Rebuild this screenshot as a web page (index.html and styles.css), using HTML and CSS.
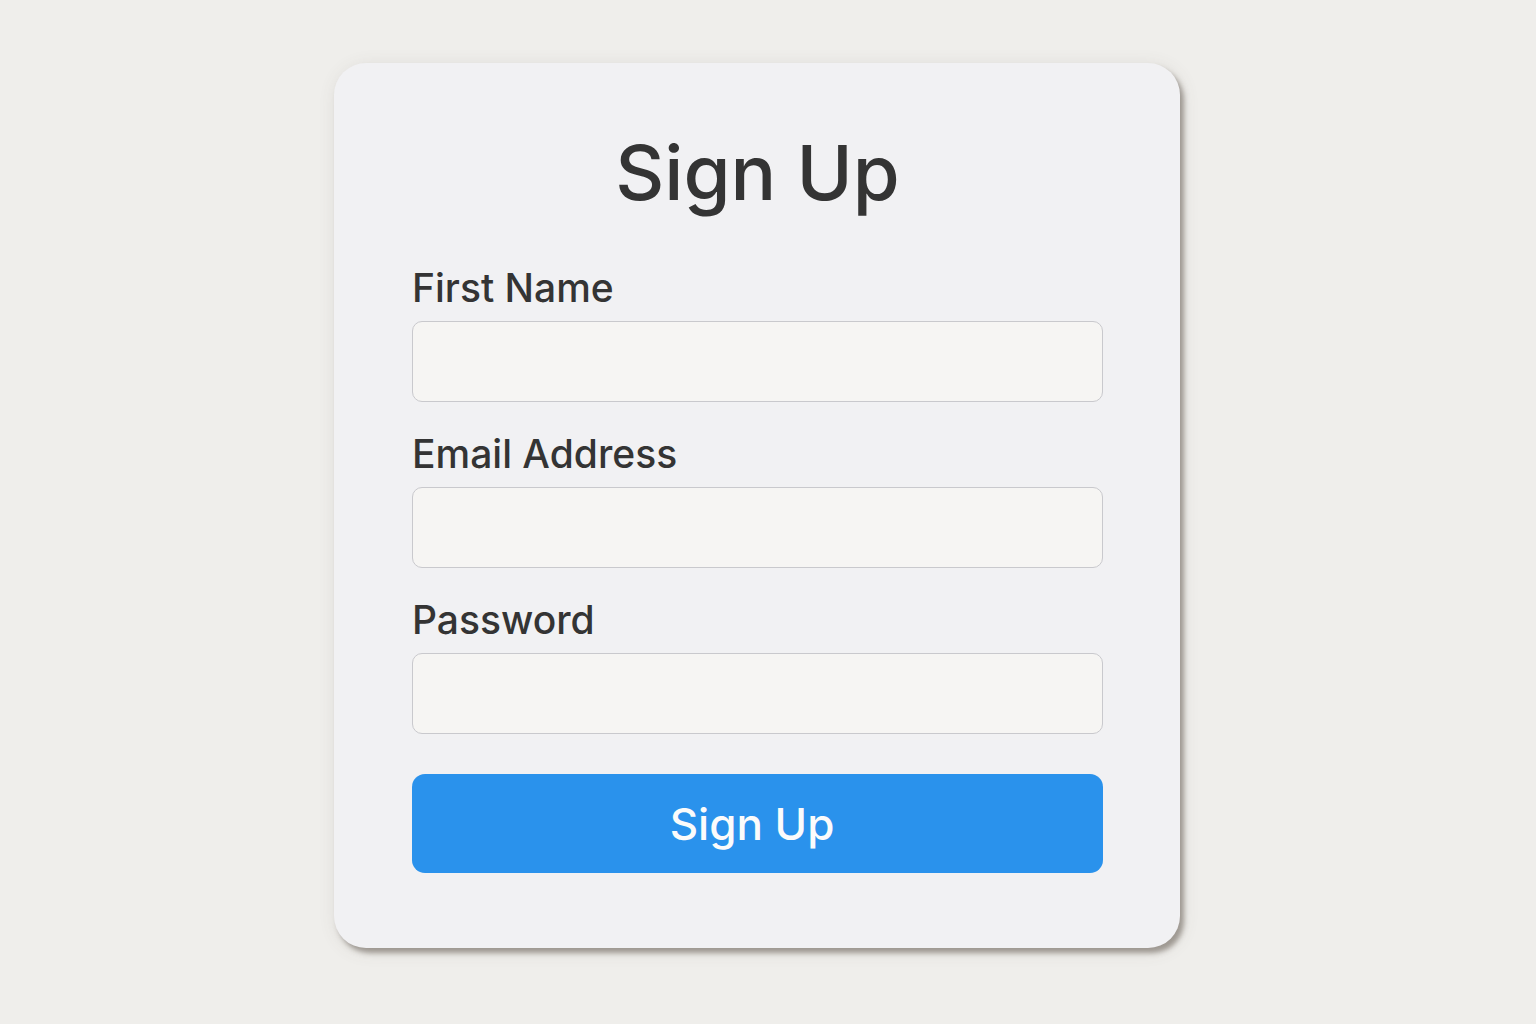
FILE: index.html
```html
<!DOCTYPE html>
<html>
  <head>
    <meta charset="utf-8">
    <title>Sign Up</title>
    <link rel="stylesheet" href="styles.css">
  </head>
  <body>
    <div class="signupCard">
      <h1 class="signupTitle">Sign Up</h1>
      <form class="signupForm" onsubmit="return false">
        <div class="field">
          <label for="firstName">First Name</label>
          <input type="text" id="firstName" name="firstName">
        </div>
        <div class="field">
          <label for="email">Email Address</label>
          <input type="email" id="email" name="email">
        </div>
        <div class="field">
          <label for="password">Password</label>
          <input type="password" id="password" name="password">
        </div>
        <button type="submit" class="submitBtn">Sign Up</button>
      </form>
    </div>
  </body>
</html>
```

FILE: styles.css
```css
body{
  margin: 0;
  height: 100vh;
  display: flex;
  align-items: flex-start;
  background-color: #efeeeb;
  font-family: Inter, "Liberation Sans", sans-serif;
  color: #343434;
}
.signupCard{
  margin: 63px 0 0 334px;
  width: 846px;
  height: 885px;
  box-sizing: border-box;
  padding: 71px 77px 0 78px;
  background-color: #f1f1f3;
  border-radius: 32px;
  box-shadow: 4px 5px 5px rgba(90, 80, 70, 0.5), 2px 3px 18px rgba(90, 80, 70, 0.12);
}
.signupTitle{
  margin: 0 0 58px 0;
  font-size: 76px;
  line-height: 1;
  font-weight: 500;
  text-align: center;
}
.signupForm{
  display: flex;
  flex-direction: column;
}
.field{
  display: flex;
  flex-direction: column;
  margin-bottom: 32px;
}
.field label{
  font-size: 39px;
  line-height: 1;
  font-weight: 500;
  margin-bottom: 14px;
}
.field input{
  height: 81px;
  box-sizing: border-box;
  border: 1.5px solid #c9c9cd;
  border-radius: 10px;
  background-color: #f6f5f3;
  font-family: inherit;
  font-size: 28px;
  padding: 0 20px;
  outline: none;
}
.submitBtn{
  margin-top: 8px;
  height: 99px;
  padding: 0 11px 0 0;
  border: none;
  border-radius: 13px;
  background-color: #2a92ec;
  color: #fbfbfb;
  font-family: inherit;
  font-size: 44px;
  line-height: 1;
  font-weight: 500;
  cursor: pointer;
}
```
